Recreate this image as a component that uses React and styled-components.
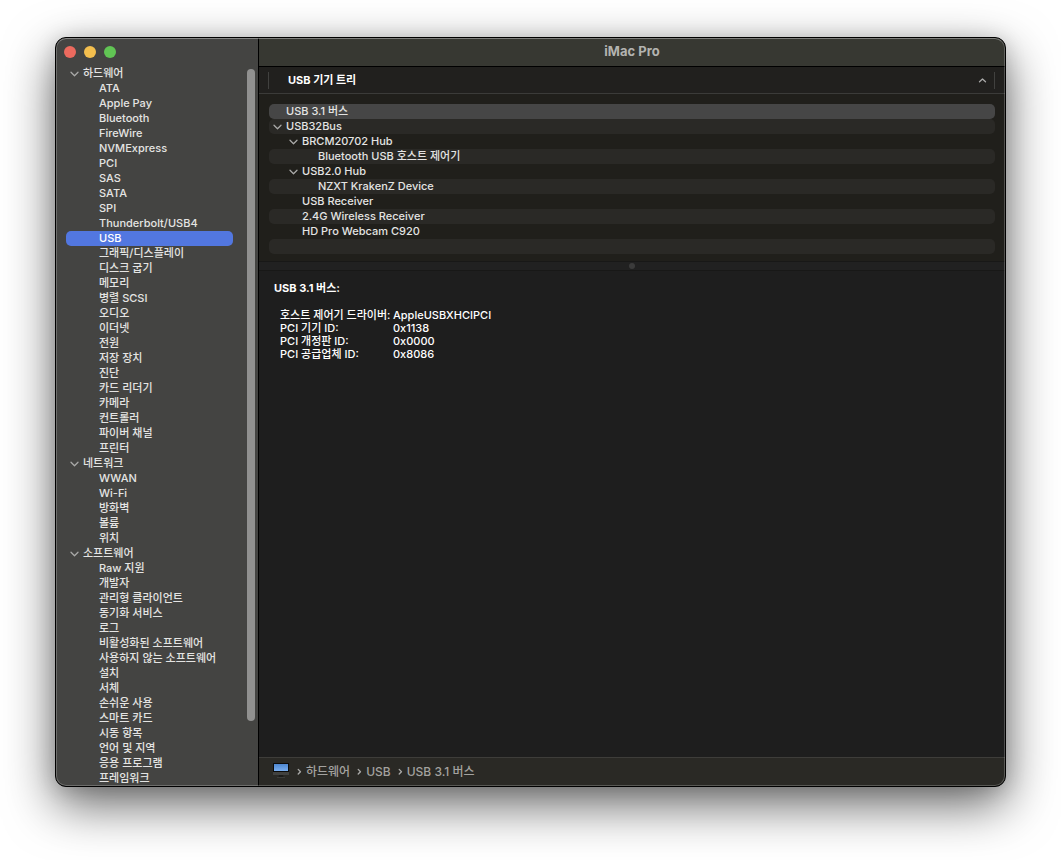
// App.jsx
import React, { useState } from "react";
import styled, { createGlobalStyle } from "styled-components";

const GlobalStyle = createGlobalStyle`
  * {
    box-sizing: border-box;
  }

  body {
    margin: 0;
    background: #fff;
    color: #e4e4e3;
    font: 500 11px/15px Inter, "Noto Sans CJK KR", sans-serif;
  }

  button {
    margin: 0;
    padding: 0;
    border: 0;
    background: none;
    color: inherit;
    font: inherit;
    text-align: left;
    white-space: nowrap;
  }
`;

const Desktop = styled.div`
  display: flex;
  height: 100vh;
  padding: 37px 55px 73px;
`;

const Window = styled.div`
  position: relative;
  display: flex;
  flex: 1;
  min-width: 0;
  border: 1px solid #000;
  border-radius: 11px;
  overflow: hidden;
  background: #1e1e1e;
  box-shadow: 0 18px 50px rgba(0, 0, 0, 0.6), 0 2px 20px rgba(0, 0, 0, 0.15);

  /* light inner edge of the window frame */
  &::after {
    content: "";
    position: absolute;
    inset: 0;
    border: 1px solid rgba(255, 255, 255, 0.22);
    border-top-color: rgba(255, 255, 255, 0.36);
    border-radius: 10px;
    pointer-events: none;
  }
`;

const Sidebar = styled.aside`
  display: flex;
  flex-direction: column;
  flex: none;
  width: 203px;
  border-right: 1px solid #000;
  background: #444442;
`;

const TrafficLights = styled.div`
  display: flex;
  flex: none;
  gap: 8px;
  height: 28px;
  padding: 8px 8px 0;
`;

const TrafficLight = styled.button`
  width: 12px;
  height: 12px;
  border-radius: 50%;
  background: ${({ $color }) => $color};
`;

const SidebarBody = styled.div`
  display: flex;
  flex: 1;
  min-height: 0;
`;

const SidebarNav = styled.nav`
  flex: 1;
  min-width: 0;
  padding-left: 10px;
  overflow: hidden;
`;

const GroupButton = styled.button`
  display: flex;
  align-items: center;
  gap: 4px;
  width: 100%;
  height: 15px;
  padding-left: 4px;
`;

const SidebarItem = styled.button`
  display: block;
  width: 100%;
  height: 15px;
  padding-left: 33px;
  border-radius: 5px;
  background: ${({ $selected }) => ($selected ? "#5277e0" : "transparent")};
  color: ${({ $selected }) => ($selected ? "#fff" : "inherit")};
`;

const ScrollTrack = styled.div`
  width: 25px;
  padding: 3px 3px 0 14px;
`;

const ScrollThumb = styled.div`
  height: 91%;
  border-radius: 4px;
  background: #919190;
`;

const Main = styled.main`
  display: flex;
  flex-direction: column;
  flex: 1;
  min-width: 0;
`;

const TitleBar = styled.header`
  height: 29px;
  border-bottom: 1px solid #000;
  background: #373832;
  color: #b3b3b0;
  font-size: 13px;
  font-weight: 700;
  line-height: 26px;
  text-align: center;
`;

const ColumnHeader = styled.div`
  display: flex;
  height: 27px;
  padding: 5px 10px 4px 9px;
  border-bottom: 1px solid #3b3b39;
  background: #21201e;
`;

const ColumnButton = styled.button`
  display: flex;
  flex: 1;
  align-items: center;
  justify-content: space-between;
  padding: 0 7px 0 19px;
  border: solid #41413f;
  border-width: 0 1px;
  color: #fff;
  font-weight: 700;
`;

const Tree = styled.div`
  padding: 10px 10px 7px;
  background: #201f1b;
`;

const TreeRow = styled.button`
  display: flex;
  align-items: center;
  gap: 4px;
  width: 100%;
  height: 15px;
  padding-left: ${({ $level }) => 4 + $level * 16}px;
  border-radius: 5px;
  background: ${({ $selected, $striped }) =>
    $selected ? "#464646" : $striped ? "#2a2926" : "transparent"};
`;

const ArrowSlot = styled.span`
  display: flex;
  width: 9px;
`;

const Splitter = styled.div`
  display: flex;
  align-items: center;
  justify-content: center;
  height: 10px;
  border: solid #181817;
  border-width: 1px 0;
  background: #212121;
`;

const Grip = styled.span`
  width: 6px;
  height: 6px;
  border-radius: 50%;
  background: #3b3b3b;
`;

const Detail = styled.section`
  flex: 1;
  min-height: 0;
  padding: 10px 15px;
  color: #fff;
`;

const DetailTitle = styled.h2`
  margin: 0 0 13px;
  font-size: 11px;
  font-weight: 700;
  line-height: 15px;
`;

const DetailTable = styled.table`
  margin-left: 6px;
  border-collapse: collapse;
  line-height: 13px;
`;

const DetailKey = styled.th`
  width: 113px;
  height: 13px;
  padding: 0;
  font-weight: 500;
  text-align: left;
  white-space: nowrap;
`;

const DetailValue = styled.td`
  padding: 0;
`;

const PathBar = styled.footer`
  display: flex;
  align-items: center;
  gap: 4px;
  height: 29px;
  padding: 0 13px 2px;
  border-top: 1px solid #3e3d3a;
  background: #2a2925;
  color: #a3a29f;
  font-size: 12px;
`;

const Crumb = styled.span`
  display: flex;
  align-items: center;
  gap: 4px;
  margin-left: 3px;
`;

const GROUPS = [
  {
    name: "하드웨어",
    items: [
      "ATA",
      "Apple Pay",
      "Bluetooth",
      "FireWire",
      "NVMExpress",
      "PCI",
      "SAS",
      "SATA",
      "SPI",
      "Thunderbolt/USB4",
      "USB",
      "그래픽/디스플레이",
      "디스크 굽기",
      "메모리",
      "병렬 SCSI",
      "오디오",
      "이더넷",
      "전원",
      "저장 장치",
      "진단",
      "카드 리더기",
      "카메라",
      "컨트롤러",
      "파이버 채널",
      "프린터",
    ],
  },
  {
    name: "네트워크",
    items: ["WWAN", "Wi-Fi", "방화벽", "볼륨", "위치"],
  },
  {
    name: "소프트웨어",
    items: [
      "Raw 지원",
      "개발자",
      "관리형 클라이언트",
      "동기화 서비스",
      "로그",
      "비활성화된 소프트웨어",
      "사용하지 않는 소프트웨어",
      "설치",
      "서체",
      "손쉬운 사용",
      "스마트 카드",
      "시동 항목",
      "언어 및 지역",
      "응용 프로그램",
      "프레임워크",
    ],
  },
];

const DEVICES = [
  { name: "USB 3.1 버스", level: 0 },
  { name: "USB32Bus", level: 0, open: true },
  { name: "BRCM20702 Hub", level: 1, open: true },
  { name: "Bluetooth USB 호스트 제어기", level: 2 },
  { name: "USB2.0 Hub", level: 1, open: true },
  { name: "NZXT KrakenZ Device", level: 2 },
  { name: "USB Receiver", level: 1 },
  { name: "2.4G Wireless Receiver", level: 1 },
  { name: "HD Pro Webcam C920", level: 1 },
  { name: "", level: 0 },
];

const DETAILS = [
  ["호스트 제어기 드라이버:", "AppleUSBXHCIPCI"],
  ["PCI 기기 ID:", "0x1138"],
  ["PCI 개정판 ID:", "0x0000"],
  ["PCI 공급업체 ID:", "0x8086"],
];

const PATH = ["하드웨어", "USB", "USB 3.1 버스"];

const Stroke = styled.svg`
  flex: none;
  fill: none;
  stroke: #a9a9a8;
  stroke-width: 1.3;
  stroke-linecap: round;
  stroke-linejoin: round;
`;

const DownArrow = () => (
  <Stroke width="9" height="9" viewBox="0 0 9 9" aria-hidden="true">
    <path d="M1 3.3 4.5 6.8 8 3.3" />
  </Stroke>
);

const UpArrow = () => (
  <Stroke width="9" height="9" viewBox="0 0 9 9" aria-hidden="true">
    <path d="M1.5 5.8 4.5 3 7.5 5.8" />
  </Stroke>
);

const RightArrow = () => (
  <Stroke width="5" height="9" viewBox="0 0 5 9" aria-hidden="true">
    <path d="M1.2 2.4 3.5 4.7 1.2 7" />
  </Stroke>
);

const MonitorIcon = () => (
  <svg width="18" height="18" viewBox="0 0 18 18" aria-hidden="true">
    <defs>
      <linearGradient id="screen" x1="0" y1="0" x2="0" y2="1">
        <stop offset="0" stopColor="#4d86cf" />
        <stop offset="1" stopColor="#79aef0" />
      </linearGradient>
    </defs>
    <rect x="1" y="1" width="16" height="10" fill="#0b0b0b" />
    <rect x="2" y="2" width="14" height="7" fill="url(#screen)" />
    <rect x="1" y="10" width="16" height="3" fill="#41413f" />
    <path d="M7 13h4l.6 2.4H6.4z" fill="#1b1b1a" />
    <rect x="5" y="15" width="8" height="1" fill="#3c3c3a" />
  </svg>
);

const App = () => {
  const [section, setSection] = useState("USB");
  const [device, setDevice] = useState(0);

  return (
    <>
      <GlobalStyle />
      <Desktop>
        <Window>
          <Sidebar>
            <TrafficLights>
              <TrafficLight $color="#ec6a5e" aria-label="닫기" />
              <TrafficLight $color="#f4bf4e" aria-label="최소화" />
              <TrafficLight $color="#61c554" aria-label="확대" />
            </TrafficLights>
            <SidebarBody>
              <SidebarNav>
                {GROUPS.map((group) => (
                  <div key={group.name}>
                    <GroupButton aria-expanded="true">
                      <DownArrow />
                      {group.name}
                    </GroupButton>
                    {group.items.map((item) => (
                      <SidebarItem
                        key={item}
                        $selected={item === section}
                        onClick={() => setSection(item)}
                      >
                        {item}
                      </SidebarItem>
                    ))}
                  </div>
                ))}
              </SidebarNav>
              <ScrollTrack>
                <ScrollThumb />
              </ScrollTrack>
            </SidebarBody>
          </Sidebar>
          <Main>
            <TitleBar>iMac Pro</TitleBar>
            <ColumnHeader>
              <ColumnButton>
                USB 기기 트리
                <UpArrow />
              </ColumnButton>
            </ColumnHeader>
            <Tree>
              {DEVICES.map((row, index) => (
                <TreeRow
                  key={index}
                  $level={row.level}
                  $selected={index === device}
                  $striped={index % 2 === 1}
                  disabled={!row.name}
                  onClick={() => setDevice(index)}
                >
                  <ArrowSlot>{row.open && <DownArrow />}</ArrowSlot>
                  {row.name}
                </TreeRow>
              ))}
            </Tree>
            <Splitter>
              <Grip />
            </Splitter>
            <Detail>
              <DetailTitle>USB 3.1 버스:</DetailTitle>
              <DetailTable>
                <tbody>
                  {DETAILS.map(([label, value]) => (
                    <tr key={label}>
                      <DetailKey scope="row">{label}</DetailKey>
                      <DetailValue>{value}</DetailValue>
                    </tr>
                  ))}
                </tbody>
              </DetailTable>
            </Detail>
            <PathBar>
              <MonitorIcon />
              {PATH.map((name) => (
                <Crumb key={name}>
                  <RightArrow />
                  {name}
                </Crumb>
              ))}
            </PathBar>
          </Main>
        </Window>
      </Desktop>
    </>
  );
};

export default App;
